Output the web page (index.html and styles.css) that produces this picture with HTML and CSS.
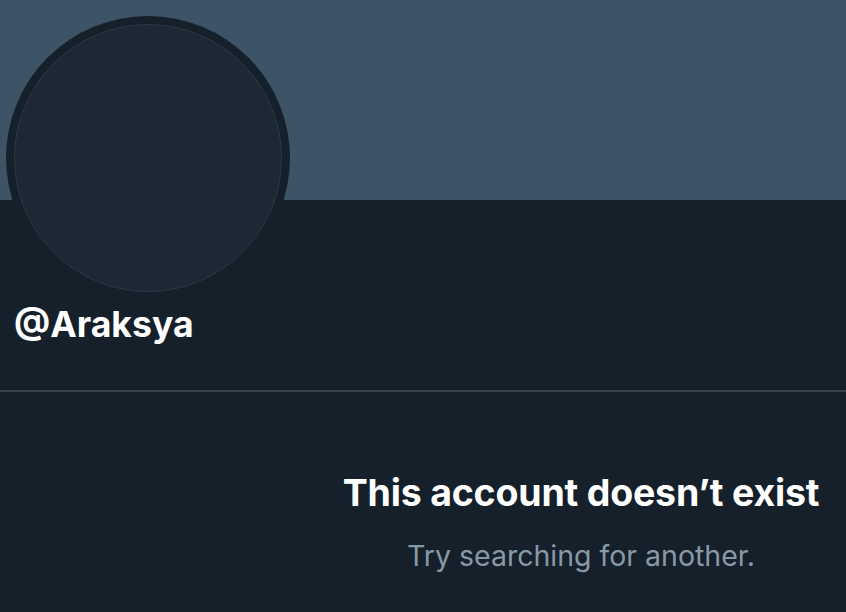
FILE: index.html
```html
<!DOCTYPE html>
<html>
<head>
<meta charset="utf-8">
<link rel="stylesheet" href="styles.css">
</head>
<body>
<div class="page">
  <div class="banner"></div>
  <div class="profile">
    <div class="avatar"><div class="avatar-inner"></div></div>
    <div class="handle">@Araksya</div>
  </div>
  <div class="divider"></div>
  <div class="empty">
    <div class="empty-title">This account doesn’t exist</div>
    <div class="empty-sub">Try searching for another.</div>
  </div>
</div>
</body>
</html>
```
FILE: styles.css
```css
html, body {
  margin: 0;
  padding: 0;
  background: #15202b;
  font-family: Inter, "Liberation Sans", sans-serif;
}
.page {
  width: 846px;
  height: 612px;
  overflow: hidden;
  background: #15202b;
}
.banner {
  height: 200px;
  background: #3d5466;
}
.profile {
  position: relative;
  height: 190px;
  padding-left: 14px;
  box-sizing: border-box;
}
.avatar {
  position: absolute;
  left: 6px;
  top: -184px;
  width: 284px;
  height: 284px;
  border-radius: 50%;
  background: #15202b;
  padding: 8px;
  box-sizing: border-box;
}
.avatar-inner {
  width: 100%;
  height: 100%;
  border-radius: 50%;
  background: #1c2833;
  border: 1px solid #2c3844;
  box-sizing: border-box;
}
.handle {
  padding-top: 105px;
  color: #ffffff;
  font-weight: 700;
  font-size: 35.6px;
  line-height: 40px;
  letter-spacing: 0;
}
.divider {
  height: 2px;
  background: #38444d;
}
.empty {
  padding-left: 316px;
  padding-top: 79px;
  text-align: center;
}
.empty-title {
  color: #ffffff;
  font-weight: 700;
  font-size: 37.5px;
  line-height: 44px;
  letter-spacing: -0.2px;
}
.empty-sub {
  margin-top: 24px;
  color: #8899a6;
  font-size: 28.5px;
  line-height: 34px;
}
```
